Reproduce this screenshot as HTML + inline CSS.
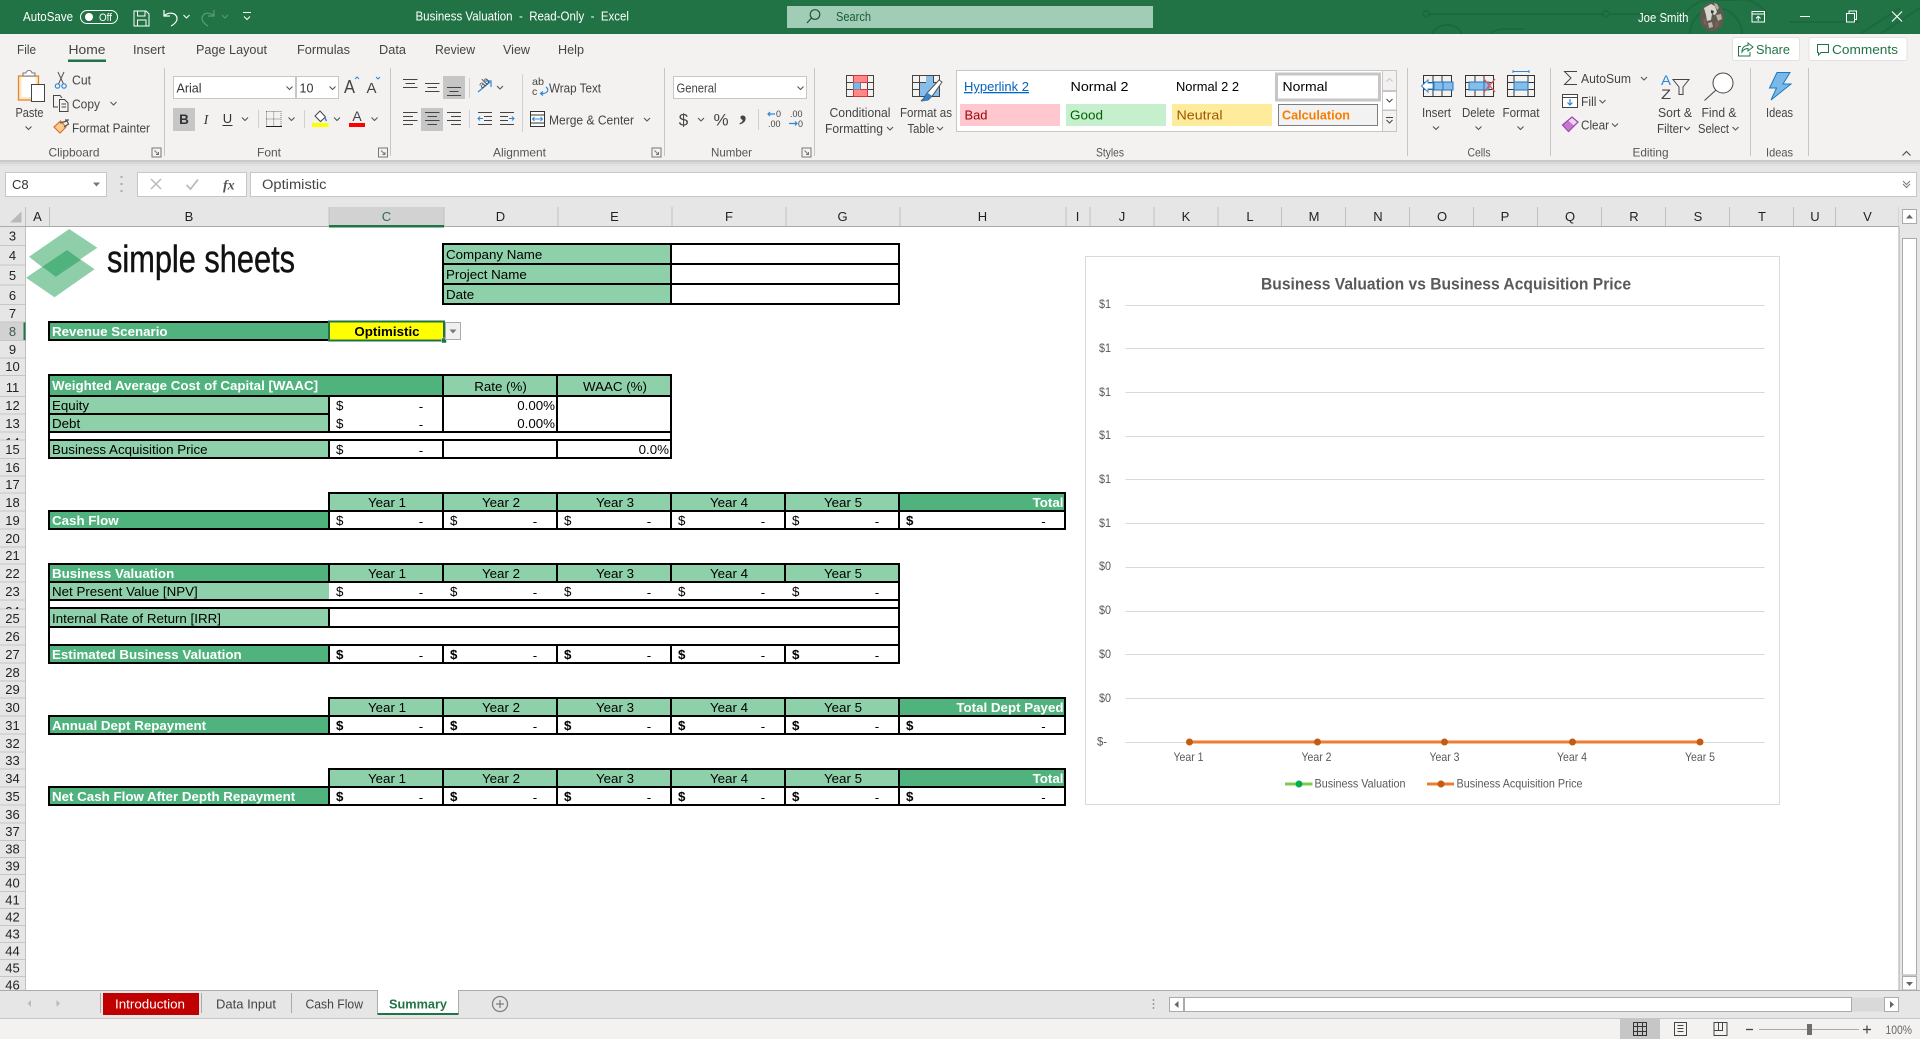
<!DOCTYPE html>
<html lang="en"><head><meta charset="utf-8"><title>Business Valuation - Excel</title>
<style>
html,body{margin:0;padding:0;width:1920px;height:1039px;overflow:hidden;background:#fff}
svg{display:block}
text{font-family:"Liberation Sans",Arial,sans-serif}
.w{fill:#fff;font-size:13px}
.t{fill:#444;font-size:13px}
.g{fill:#555;font-size:12px}
.c{fill:#000;font-size:13.33px}
.b{fill:#fff;font-size:13.33px;font-weight:bold}
.k{fill:#000;font-size:13.33px;font-weight:bold}
.m{text-anchor:middle}
.e{text-anchor:end}
.rh{fill:#222;font-size:13px;text-anchor:middle}
.ax{fill:#595959;font-size:12px}
.ln{fill:none;stroke:#444;stroke-width:1}
.bl{fill:none;stroke:#2b88d8;stroke-width:1.2}
</style></head><body>
<svg xmlns="http://www.w3.org/2000/svg" width="1920" height="1039" viewBox="0 0 1920 1039">
<defs><path id="ch" d="M-3 -1.5L0 1.5L3 -1.5" fill="none" stroke="#555" stroke-width="1.1"/>
<path id="dl" d="M-4.500 -4.500H4.500V4.500H-4.500ZM-2 -2L2 2M2 -.5V2H-.5" fill="none" stroke="#777" stroke-width="1"/></defs>

<!-- title bar -->
<rect width="1920" height="34" fill="#217346"/>
<g fill="none" stroke="#1b6a3d" stroke-width="2">
<path d="M1429 14H1603M1610 14H1660"/><circle cx="1426" cy="14" r="3"/><circle cx="1606" cy="14" r="3"/>
<path d="M1432 34a16 14 0 0 1 30 0M1490 34q5-5 14-5h20M1690 34a26 26 0 0 1 52 0M1685 14a30 30 0 0 1 30-14h22a30 30 0 0 1 30 14M1860 34l40-26M1880 34l40-26M1790 22h70"/>
</g>
<text class="w" x="23" y="21" textLength="50" lengthAdjust="spacingAndGlyphs">AutoSave</text>
<rect x="80.500" y="10.500" width="37" height="13" rx="6.500" fill="none" stroke="#fff"/>
<circle cx="89" cy="17" r="4" fill="#fff"/>
<text class="w" x="99" y="21" style="font-size:11px" textLength="13" lengthAdjust="spacingAndGlyphs">Off</text>
<path d="M134 11H146L149 14V26H134ZM137.500 11V16H145V11M137.500 26V20H146V26" fill="none" stroke="#fff"/>
<path d="M164 10V16H170M164 16C168 12 176 12 177 18C177.500 22 173 25 171 26" fill="none" stroke="#fff" stroke-width="1.200"/>
<path d="M183.500 15l3 3l3-3" fill="none" stroke="#fff"/>
<path d="M214 10V16H208M214 16C210 12 203 12 202 18C202 22 206 25 208 26" fill="none" stroke="#5c9a78" stroke-width="1.200"/>
<path d="M222 15l3 3l3-3" fill="none" stroke="#5c9a78"/>
<path d="M243 12.500H251M244 16.500l3 3l3-3" fill="none" stroke="#fff"/>
<text class="w" x="415.500" y="20.500" textLength="213.500" lengthAdjust="spacingAndGlyphs" xml:space="preserve">Business Valuation  -  Read-Only  -  Excel</text>
<rect x="787" y="6" width="366" height="22" fill="#a1cdb6"/>
<circle cx="815" cy="14.500" r="4.800" fill="none" stroke="#1c5a38" stroke-width="1.200"/><path d="M811.500 18L807 23" stroke="#1c5a38" stroke-width="1.300"/>
<text x="836" y="21" style="font-size:13px;fill:#1a5c3a" textLength="35" lengthAdjust="spacingAndGlyphs">Search</text>
<text class="w" x="1638" y="22" textLength="50.500" lengthAdjust="spacingAndGlyphs">Joe Smith</text>
<ellipse cx="1712" cy="17" rx="12" ry="14.500" fill="#5d5a50"/>
<path d="M1704 8l7-4l4 2l2 6l-2 3l-3-1l-1 6l-4 1l-1-6z" fill="#d9d6cf"/>
<path d="M1714 3l3 1l2 4l-2 2zM1716 15l5-1l1 5l-4 2zM1708 23l4-1l1 5l-4 1z" fill="#b8b2a6"/>
<path d="M1703 18l3 1l1 7l-3-2zM1715 22l4-1l-1 6l-3 1z" fill="#7d5f58"/><path d="M1711 10l3 1l-1 3l-2-1z" fill="#3a3a34"/>
<path d="M1752 11.500H1764.500V22H1752ZM1752 14H1764.500M1758.200 21V16.500M1756 18.500L1758.200 16.200L1760.500 18.500" fill="none" stroke="#fff"/>
<path d="M1800 16.500H1810" stroke="#fff"/>
<path d="M1846.500 13.500H1854.500V22H1846.500ZM1849 13.500V11H1856.500V19.500H1854.500" fill="none" stroke="#fff"/>
<path d="M1892 11.500L1902 21.500M1902 11.500L1892 21.500" stroke="#fff" stroke-width="1.100"/>

<!-- ribbon -->
<rect y="34" width="1920" height="126" fill="#f3f2f1"/>
<rect y="160" width="1920" height="47" fill="#e6e6e6"/>
<rect y="160" width="1920" height="2" fill="#c9c9c9"/><rect y="162" width="1920" height="2" fill="#d8d8d8"/><rect y="164" width="1920" height="2" fill="#e1e1e1"/>
<g class="t">
<text x="17" y="54" textLength="19" lengthAdjust="spacingAndGlyphs">File</text>
<text x="68.500" y="54" textLength="37" lengthAdjust="spacingAndGlyphs">Home</text>
<text x="133" y="54" textLength="32" lengthAdjust="spacingAndGlyphs">Insert</text>
<text x="196" y="54" textLength="71" lengthAdjust="spacingAndGlyphs">Page Layout</text>
<text x="297" y="54" textLength="53" lengthAdjust="spacingAndGlyphs">Formulas</text>
<text x="379" y="54" textLength="27" lengthAdjust="spacingAndGlyphs">Data</text>
<text x="435" y="54" textLength="40" lengthAdjust="spacingAndGlyphs">Review</text>
<text x="503" y="54" textLength="27" lengthAdjust="spacingAndGlyphs">View</text>
<text x="558" y="54" textLength="26" lengthAdjust="spacingAndGlyphs">Help</text>
</g>
<rect x="68" y="59.500" width="38" height="2.500" fill="#217346"/>
<rect x="1732.500" y="37.500" width="67" height="23" rx="2" fill="#fff" stroke="#e4e2e0"/>
<path d="M1741 46.500H1738.500V56H1750V52M1742 52C1742 47 1745 45.500 1748 45.500V43L1753 47L1748 51V48.500C1745.500 48.500 1743.500 49.500 1742 52Z" fill="none" stroke="#217346"/>
<text x="1756" y="54" style="font-size:13px;fill:#217346" textLength="34" lengthAdjust="spacingAndGlyphs">Share</text>
<rect x="1809" y="37.500" width="98" height="23" rx="2" fill="#fff" stroke="#e4e2e0"/>
<path d="M1817.500 44.500H1828.500V52.500H1821L1818.500 55V52.500H1817.500Z" fill="none" stroke="#217346"/>
<text x="1832" y="54" style="font-size:13px;fill:#217346" textLength="66" lengthAdjust="spacingAndGlyphs">Comments</text>

<!-- separators -->
<path d="M164.500 68V156M390.500 68V156M664.500 68V156M814.500 68V156M1407.500 68V156M1550.500 68V156M1750.500 68V156M1808.500 68V156" stroke="#c8c6c4"/>
<path d="M258.500 110V128M304.500 110V128M469.500 78V98M469.500 110V128M522.500 74V132M758.500 109V130" stroke="#d2d0ce"/>
<g class="g" text-anchor="middle">
<text x="74" y="156.500" textLength="51" lengthAdjust="spacingAndGlyphs">Clipboard</text>
<text x="269" y="156.500">Font</text>
<text x="519.500" y="156.500" textLength="53" lengthAdjust="spacingAndGlyphs">Alignment</text>
<text x="731.500" y="156.500" textLength="41" lengthAdjust="spacingAndGlyphs">Number</text>
<text x="1110" y="156.500" textLength="28" lengthAdjust="spacingAndGlyphs">Styles</text>
<text x="1479" y="156.500" textLength="23" lengthAdjust="spacingAndGlyphs">Cells</text>
<text x="1650.500" y="156.500" textLength="36" lengthAdjust="spacingAndGlyphs">Editing</text>
<text x="1779.500" y="156.500" textLength="27" lengthAdjust="spacingAndGlyphs">Ideas</text>
</g>
<use href="#dl" x="156.500" y="152.500"/><use href="#dl" x="383" y="152.500"/><use href="#dl" x="656.500" y="152.500"/><use href="#dl" x="806.500" y="152.500"/>
<path d="M1902.500 155.500L1906.500 151.500L1910.500 155.500" fill="none" stroke="#555" stroke-width="1.200"/>

<!-- clipboard -->
<rect x="18.500" y="76" width="20" height="24" fill="#fbe7c3" stroke="#e3882a" stroke-width="1.300"/>
<rect x="21.500" y="77" width="14" height="20" fill="#fff"/>
<path d="M23 76V73H26A3 2.500 0 0 1 32 73H35V76Z" fill="#fff" stroke="#777"/>
<rect x="31.500" y="84.500" width="13" height="17" fill="#fff" stroke="#444"/>
<text class="t m" x="29.500" y="117" textLength="28" lengthAdjust="spacingAndGlyphs">Paste</text>
<use href="#ch" x="28.500" y="128"/>
<path d="M58 72L63.500 84M64 72L58.500 84" fill="none" stroke="#555"/><circle cx="57.500" cy="86" r="2.200" fill="none" stroke="#2b88d8" stroke-width="1.200"/><circle cx="64" cy="86" r="2.200" fill="none" stroke="#2b88d8" stroke-width="1.200"/>
<text class="t" x="72" y="84.500" textLength="19" lengthAdjust="spacingAndGlyphs">Cut</text>
<path d="M58 107H53.500V95.500H60L62 98M59.500 99.500H64.500L68 103V111.500H59.500ZM61.500 104H66M61.500 107H66" fill="none" stroke="#444"/>
<text class="t" x="72" y="108.500" textLength="28" lengthAdjust="spacingAndGlyphs">Copy</text>
<use href="#ch" x="113.500" y="103.500"/>
<path d="M54 127L60.500 121L66 127L60 133Z" fill="#f5cd96" stroke="#e3712a" stroke-width="1.200"/><path d="M60 123L67 121L68.500 124L64 127M65 120L69 120" fill="none" stroke="#555" stroke-width="1.200"/>
<text class="t" x="72" y="132.500" textLength="78" lengthAdjust="spacingAndGlyphs">Format Painter</text>

<!-- font -->
<rect x="173.500" y="76.500" width="122" height="22" fill="#fff" stroke="#c8c6c4"/>
<text x="176.500" y="92.500" style="font-size:12.500px;fill:#333">Arial</text><use href="#ch" x="289.500" y="88"/>
<rect x="296.500" y="76.500" width="42" height="22" fill="#fff" stroke="#c8c6c4"/>
<text x="299.500" y="92.500" style="font-size:12.500px;fill:#333">10</text><use href="#ch" x="332.500" y="88"/>
<text x="344" y="93" style="font-size:18px;fill:#444" textLength="11" lengthAdjust="spacingAndGlyphs">A</text><path d="M355 79L357 77L359 79" fill="none" stroke="#2b88d8"/>
<text x="366.500" y="93" style="font-size:15px;fill:#444" textLength="10" lengthAdjust="spacingAndGlyphs">A</text><path d="M376 77L378 79L380 77" fill="none" stroke="#2b88d8"/>
<rect x="173" y="108" width="22" height="23" fill="#c6c6c6"/>
<text x="184" y="124" style="font-size:13.500px;font-weight:bold;fill:#333" text-anchor="middle">B</text>
<text x="206" y="124" style="font-size:13.500px;font-style:italic;fill:#333;font-family:'Liberation Serif',serif" text-anchor="middle">I</text>
<text x="227.500" y="123" style="font-size:13px;fill:#333" text-anchor="middle">U</text><path d="M222.500 125.500H232.500" stroke="#333"/>
<use href="#ch" x="245" y="119"/>
<path d="M266.500 111.500H281V126.500H266.500ZM273.700 111.500V126.500M266.500 119H281" fill="none" stroke="#777" stroke-dasharray="1 1"/><path d="M266 126.500H282" stroke="#222"/>
<use href="#ch" x="291.500" y="119"/>
<path d="M315 116L320 111L325.500 117L320.500 121.500Z" fill="#fff" stroke="#444"/><path d="M324.500 117L326.500 121" stroke="#2b88d8" stroke-width="1.500"/>
<rect x="312" y="123" width="16.500" height="4" fill="#ffff00"/>
<use href="#ch" x="337" y="119"/>
<text x="357" y="121" style="font-size:14px;fill:#444" text-anchor="middle">A</text><rect x="349" y="123" width="16" height="4" fill="#ff0000"/>
<use href="#ch" x="374.500" y="119"/>

<!-- alignment -->
<rect x="443" y="76" width="22" height="23" fill="#c6c6c6"/><rect x="421" y="108" width="22" height="23" fill="#c6c6c6"/>
<path d="M403 79.500H417.500M405.500 83.500H415M403 87.500H417.500M425 83.500H439.500M427.500 87.500H437M425 91.500H439.500M447 87.500H461M449.500 91.500H458.500M447 95.500H461" stroke="#444"/>
<path d="M403 112.500H417.500M403 116.500H413M403 120.500H417.500M403 124.500H413M425 112.500H439.500M427.500 116.500H437M425 120.500H439.500M427.500 124.500H437M447 112.500H461M451 116.500H461M447 120.500H461M451 124.500H461" stroke="#444"/>
<path d="M478 92L490 82M485 81h6v6" fill="none" stroke="#2b88d8" stroke-width="1.200"/>
<text x="484" y="86" style="font-size:10px;fill:#444" text-anchor="middle" transform="rotate(-45 484 83)">ab</text>
<use href="#ch" x="500" y="87.500"/>
<path d="M478 112.500H492M484 116.500H492M484 120.500H492M478 124.500H492M500 112.500H514M500 116.500H508M500 120.500H508M500 124.500H514" stroke="#444"/>
<path d="M483 118.500H478M480 116.500L478 118.500L480 120.500M509 118.500H514M512 116.500L514 118.500L512 120.500" fill="none" stroke="#2b88d8"/>
<text x="532" y="85" style="font-size:10.500px;fill:#444" textLength="12" lengthAdjust="spacingAndGlyphs">ab</text>
<text x="532" y="95" style="font-size:10.500px;fill:#444">c</text>
<path d="M546 87C550 90 547 94 541 93.500M543 91.500L540.500 93.500L543 95.500" fill="none" stroke="#2b88d8" stroke-width="1.200"/>
<text class="t" x="549" y="92.500" textLength="52" lengthAdjust="spacingAndGlyphs">Wrap Text</text>
<rect x="530.500" y="111.500" width="14" height="15" fill="#fff" stroke="#333"/><path d="M530.500 115H544.500M530.500 123H544.500" stroke="#333"/><path d="M533 119H542M534.500 117L532.500 119L534.500 121M540.500 117L542.500 119L540.500 121" fill="none" stroke="#2b88d8"/>
<text class="t" x="549" y="124.500" textLength="85" lengthAdjust="spacingAndGlyphs">Merge &amp; Center</text>
<use href="#ch" x="647" y="119.500"/>

<!-- number -->
<rect x="673.500" y="76.500" width="133" height="22" fill="#fff" stroke="#c8c6c4"/>
<text x="676.500" y="92.500" style="font-size:12.500px;fill:#444" textLength="40" lengthAdjust="spacingAndGlyphs">General</text><use href="#ch" x="800.500" y="88"/>
<text x="683.500" y="125.500" style="font-size:17px;fill:#444" text-anchor="middle">$</text><use href="#ch" x="701" y="119.500"/>
<text x="721" y="125.500" style="font-size:17px;fill:#444" text-anchor="middle">%</text>
<text x="743" y="120" style="font-size:30px;font-weight:bold;fill:#444;font-family:'Liberation Serif',serif" text-anchor="middle">,</text>
<text x="776" y="117" style="font-size:9px;fill:#444">0</text><text x="768" y="127" style="font-size:9px;fill:#444">.00</text>
<path d="M775 114H768M770 112L768 114L770 116" fill="none" stroke="#2b88d8" stroke-width="1.200"/>
<text x="790" y="117" style="font-size:9px;fill:#444">.00</text><text x="798" y="127" style="font-size:9px;fill:#444">0</text>
<path d="M789 123.500H797M795 121.500L797 123.500L795 125.500" fill="none" stroke="#2b88d8" stroke-width="1.200"/>

<!-- styles -->
<g fill="none" stroke="#444"><rect x="846.500" y="75.500" width="27" height="21"/><path d="M853.500 75.500V96.500M860.500 75.500V96.500M867.500 75.500V96.500M846.500 82.500H873.500M846.500 89.500H873.500"/></g>
<rect x="853.500" y="75.500" width="14" height="7" fill="#f88" stroke="#d33"/><rect x="853.500" y="89.500" width="14" height="7" fill="#f88" stroke="#d33"/><rect x="853.500" y="82.500" width="7" height="7" fill="#7ab8e8"/>
<text class="t m" x="860" y="117" textLength="61" lengthAdjust="spacingAndGlyphs">Conditional</text>
<text class="t m" x="854" y="133" textLength="58" lengthAdjust="spacingAndGlyphs">Formatting</text><use href="#ch" x="890" y="128.500"/>
<g fill="none" stroke="#444"><rect x="912.500" y="75.500" width="27" height="21"/><path d="M919.500 75.500V96.500M926.500 75.500V96.500M933.500 75.500V96.500M912.500 82.500H939.500M912.500 89.500H939.500"/></g>
<rect x="920" y="83" width="19" height="13" fill="#86bdea"/><rect x="926" y="76" width="7" height="7" fill="#86bdea"/>
<path d="M942 82L933 95L928 100L921 101C925 98 925 95 928 92L939 80Z" fill="#fff" stroke="#555"/><path d="M928 93L932 96L927 100.500L921.500 101C925 98.500 925 96 928 93Z" fill="#2b88d8"/>
<text class="t m" x="926" y="117" textLength="52" lengthAdjust="spacingAndGlyphs">Format as</text>
<text class="t m" x="921" y="133" textLength="27" lengthAdjust="spacingAndGlyphs">Table</text><use href="#ch" x="940" y="128.500"/>

<rect x="956.500" y="70.500" width="440" height="61" fill="#fff" stroke="#c8c6c4"/>
<text x="964" y="91" style="font-size:13px;fill:#0563c1;text-decoration:underline" textLength="65" lengthAdjust="spacingAndGlyphs">Hyperlink 2</text>
<text x="1070.500" y="91" style="font-size:13px;fill:#000" textLength="58" lengthAdjust="spacingAndGlyphs">Normal 2</text>
<text x="1176" y="91" style="font-size:13px;fill:#000" textLength="63" lengthAdjust="spacingAndGlyphs">Normal 2 2</text>
<rect x="1276.500" y="74" width="103" height="26" fill="#fff" stroke="#c6c6c6" stroke-width="3"/>
<text x="1282.500" y="91" style="font-size:13px;fill:#000" textLength="45" lengthAdjust="spacingAndGlyphs">Normal</text>
<rect x="960" y="104" width="100" height="22" fill="#ffc7ce"/><text x="964.500" y="119.500" style="font-size:13px;fill:#9c0006" textLength="23" lengthAdjust="spacingAndGlyphs">Bad</text>
<rect x="1066" y="104" width="100" height="22" fill="#c6efce"/><text x="1070" y="119.500" style="font-size:13px;fill:#006100" textLength="33" lengthAdjust="spacingAndGlyphs">Good</text>
<rect x="1172" y="104" width="100" height="22" fill="#ffeb9c"/><text x="1176.500" y="119.500" style="font-size:13px;fill:#9c5700" textLength="46" lengthAdjust="spacingAndGlyphs">Neutral</text>
<rect x="1278.500" y="104.500" width="99" height="21" fill="#f2f2f2" stroke="#7f7f7f"/><text x="1282" y="119.500" style="font-size:13px;font-weight:bold;fill:#fa7d00" textLength="68" lengthAdjust="spacingAndGlyphs">Calculation</text>
<rect x="1382.500" y="70.500" width="14" height="20" fill="#f3f2f1" stroke="#c8c6c4"/><rect x="1382.500" y="91.500" width="14" height="18.500" fill="#fff" stroke="#c8c6c4"/><rect x="1382.500" y="110.500" width="14" height="21" fill="#f3f2f1" stroke="#c8c6c4"/>
<path d="M1386.500 81.500L1389.500 78.500L1392.500 81.500" fill="none" stroke="#c8c6c4"/><path d="M1386.500 99L1389.500 102L1392.500 99" fill="none" stroke="#444"/><path d="M1386 117.500H1393M1386.500 120L1389.500 123L1392.500 120" fill="none" stroke="#444"/>

<!-- cells -->
<g fill="none" stroke="#333"><rect x="1423.500" y="75.500" width="28" height="21"/><path d="M1433 75.500V96.500M1442 75.500V96.500M1423.500 82.500H1451.500M1423.500 89.500H1451.500"/></g>
<rect x="1434" y="82" width="19" height="8" fill="#86bdea" stroke="#1f78c1"/><path d="M1443 82V90" stroke="#1f78c1"/>
<path d="M1433 83H1428V80L1421.500 86L1428 92V89H1433Z" fill="#fff" stroke="#2b88d8"/>
<text class="t m" x="1436.500" y="117" textLength="29" lengthAdjust="spacingAndGlyphs">Insert</text><use href="#ch" x="1436" y="128"/>
<g fill="none" stroke="#333"><rect x="1465.500" y="75.500" width="28" height="21"/><path d="M1475 75.500V96.500M1484 75.500V96.500M1465.500 82.500H1493.500M1465.500 89.500H1493.500"/></g>
<rect x="1469" y="82" width="20" height="8" fill="#86bdea" stroke="#1f78c1"/><path d="M1484 82V90" stroke="#1f78c1"/>
<path d="M1484 79L1495 92M1495 79L1484 92" stroke="#e8534a" stroke-width="1.300"/>
<text class="t m" x="1478.500" y="117" textLength="33" lengthAdjust="spacingAndGlyphs">Delete</text><use href="#ch" x="1478.500" y="128"/>
<g fill="none" stroke="#333"><rect x="1507.500" y="75.500" width="27" height="21"/><path d="M1514 75.500V96.500M1528 75.500V96.500M1507.500 82.500H1534.500M1507.500 89.500H1534.500"/></g>
<rect x="1514" y="82" width="14" height="8" fill="#86bdea" stroke="#1f78c1"/>
<path d="M1513 71.500H1529M1513 70V73M1529 70V73" stroke="#2b88d8"/>
<text class="t m" x="1521" y="117" textLength="37" lengthAdjust="spacingAndGlyphs">Format</text><use href="#ch" x="1520.500" y="128"/>

<!-- editing -->
<path d="M1577 71.500H1564.500L1571 78L1564.500 84.500H1577" fill="none" stroke="#444"/>
<text class="t" x="1581" y="83" textLength="50" lengthAdjust="spacingAndGlyphs">AutoSum</text><use href="#ch" x="1644" y="78.500"/>
<rect x="1562.500" y="94.500" width="15" height="13" fill="#fff" stroke="#444"/><path d="M1562.500 97.500H1577.500" stroke="#444"/><path d="M1570 99V105M1567.500 102.500L1570 105L1572.500 102.500" fill="none" stroke="#2b88d8" stroke-width="1.200"/>
<text class="t" x="1581" y="106" textLength="15.500" lengthAdjust="spacingAndGlyphs">Fill</text><use href="#ch" x="1602.500" y="101.500"/>
<path d="M1562.500 125L1572 117L1578 122L1568.500 131.500Z" fill="#f0d4f0" stroke="#9c3fb0" stroke-width="1.200"/><path d="M1562.500 125L1568 120.500L1574 125.500L1568.500 131.500Z" fill="#b44fc0" opacity=".7"/>
<text class="t" x="1581" y="129.500" textLength="28" lengthAdjust="spacingAndGlyphs">Clear</text><use href="#ch" x="1615" y="125"/>
<text x="1661" y="85" style="font-size:14px;fill:#2b88d8" textLength="10" lengthAdjust="spacingAndGlyphs">A</text>
<text x="1661" y="99" style="font-size:14px;fill:#444" textLength="10" lengthAdjust="spacingAndGlyphs">Z</text>
<path d="M1673 79.500H1689L1683 87V94.500H1679V87Z" fill="none" stroke="#444"/>
<text class="t m" x="1675" y="117" textLength="34" lengthAdjust="spacingAndGlyphs">Sort &amp;</text>
<text class="t m" x="1670" y="133" textLength="26" lengthAdjust="spacingAndGlyphs">Filter</text><use href="#ch" x="1687" y="128.500"/>
<circle cx="1723" cy="83" r="10" fill="#fff" stroke="#444"/><path d="M1716 90L1704.500 100.500" stroke="#444"/>
<text class="t m" x="1719" y="117" textLength="35" lengthAdjust="spacingAndGlyphs">Find &amp;</text>
<text class="t m" x="1713.500" y="133" textLength="31" lengthAdjust="spacingAndGlyphs">Select</text><use href="#ch" x="1735.500" y="128.500"/>
<path d="M1777 72.500H1790L1783 84H1791L1771 100L1776.500 88H1769.500Z" fill="#7ab8e8" stroke="#1f78c1"/>
<text class="t m" x="1779.500" y="117" textLength="27" lengthAdjust="spacingAndGlyphs">Ideas</text>

<!-- formula bar -->
<rect x="5.500" y="172.500" width="101" height="24" fill="#fff" stroke="#c8c6c4"/>
<text x="12" y="189" style="font-size:13px;fill:#333">C8</text><path d="M93 182.500H100L96.500 186.500Z" fill="#777"/>
<path d="M121.500 176V178M121.500 183V185M121.500 190V192" stroke="#aaa" stroke-width="2"/>
<rect x="137.500" y="172.500" width="109" height="24" fill="#fff" stroke="#c8c6c4"/>
<path d="M151 179L161 189M161 179L151 189" stroke="#bbb" stroke-width="1.500"/>
<path d="M186.500 185L190.500 189L198 179.500" fill="none" stroke="#bbb" stroke-width="1.800"/>
<text x="223" y="189.500" style="font-size:14px;font-style:italic;font-family:'Liberation Serif',serif;fill:#555;font-weight:bold">fx</text>
<rect x="250.500" y="172.500" width="1666" height="24" fill="#fff" stroke="#c8c6c4"/>
<text x="262" y="189" style="font-size:13.500px;fill:#444" textLength="64.500" lengthAdjust="spacingAndGlyphs">Optimistic</text>
<path d="M1903 181L1906.500 184.500L1910 181M1903 184L1906.500 187.500L1910 184" fill="none" stroke="#777"/>

<!-- sheet -->
<rect x="0" y="207" width="1920" height="783" fill="#e6e6e6"/>
<rect x="25.500" y="227" width="1873.500" height="763" fill="#fff"/>
<rect x="329" y="207" width="115" height="18" fill="#d2d2d2"/>
<rect x="0" y="322" width="23.500" height="18.500" fill="#d2d2d2"/>
<path d="M10 222.500H21.500V211.500Z" fill="#b9b9b9"/>
<path d="M25.500 207V990M49.500 207V226M329 207V226M444 207V226M558 207V226M672 207V226M786 207V226M900 207V226M1066 207V226M1090 207V226M1154 207V226M1218 207V226M1281.500 207V226M1345.500 207V226M1409.500 207V226M1473.500 207V226M1537.500 207V226M1601.500 207V226M1665.500 207V226M1729.500 207V226M1793.500 207V226M1835.500 207V226M1899 207V226" stroke="#c0c0c0" fill="none"/>
<path d="M0 226.500H1899" stroke="#ababab"/><rect x="329" y="225" width="115" height="2.500" fill="#217346"/>
<rect x="23.500" y="322" width="2" height="18.500" fill="#217346"/>
<g style="font-size:13px;fill:#222" text-anchor="middle">
<text x="37.500" y="221">A</text><text x="189" y="221">B</text><text x="386.500" y="221" style="fill:#2d6b4f">C</text><text x="500.500" y="221">D</text><text x="614.500" y="221">E</text><text x="729" y="221">F</text><text x="842.500" y="221">G</text><text x="982.500" y="221">H</text><text x="1077.500" y="221">I</text><text x="1122" y="221">J</text><text x="1186" y="221">K</text><text x="1250" y="221">L</text><text x="1314" y="221">M</text><text x="1378" y="221">N</text><text x="1442" y="221">O</text><text x="1505" y="221">P</text><text x="1570" y="221">Q</text><text x="1634" y="221">R</text><text x="1698" y="221">S</text><text x="1762" y="221">T</text><text x="1815" y="221">U</text><text x="1867.500" y="221">V</text>
</g>
<path stroke="#c6c6c6" d="M0 245.500H25M0 265H25M0 285H25M0 304.500H25M0 322H25M0 340.500H25M0 358H25M0 375.500H25M0 396.500H25M0 414H25M0 432H25M0 440H25M0 458.500H25M0 476H25M0 493H25M0 511H25M0 529H25M0 547H25M0 564H25M0 582H25M0 600H25M0 609H25M0 627H25M0 645H25M0 663H25M0 681H25M0 698H25M0 716H25M0 734H25M0 752H25M0 769H25M0 787H25M0 805H25M0 823H25M0 840.500H25M0 857.500H25M0 874.500H25M0 891.500H25M0 908.500H25M0 925.500H25M0 942.500H25M0 959.500H25M0 976.500H25"/>
<g class="rh">
<text x="12.500" y="240.500">3</text><text x="12.500" y="260">4</text><text x="12.500" y="280">5</text><text x="12.500" y="300">6</text><text x="12.500" y="318">7</text><text x="12.500" y="336" style="fill:#3f5a4c">8</text><text x="12.500" y="354">9</text><text x="12.500" y="371">10</text><text x="12.500" y="392">11</text><text x="12.500" y="410">12</text><text x="12.500" y="428">13</text>
<text x="12.500" y="454">15</text><text x="12.500" y="472">16</text><text x="12.500" y="489">17</text><text x="12.500" y="507">18</text><text x="12.500" y="525">19</text><text x="12.500" y="543">20</text><text x="12.500" y="560">21</text><text x="12.500" y="578">22</text><text x="12.500" y="596">23</text>
<text x="12.500" y="623">25</text><text x="12.500" y="641">26</text><text x="12.500" y="659">27</text><text x="12.500" y="677">28</text><text x="12.500" y="694">29</text><text x="12.500" y="712">30</text><text x="12.500" y="730">31</text><text x="12.500" y="748">32</text><text x="12.500" y="765">33</text><text x="12.500" y="783">34</text><text x="12.500" y="801">35</text><text x="12.500" y="819">36</text><text x="12.500" y="836">37</text><text x="12.500" y="853.500">38</text><text x="12.500" y="870.500">39</text><text x="12.500" y="887.500">40</text><text x="12.500" y="904.500">41</text><text x="12.500" y="921.500">42</text><text x="12.500" y="938.500">43</text><text x="12.500" y="955.500">44</text><text x="12.500" y="972.500">45</text><text x="12.500" y="989.500">46</text>
</g>
<svg x="0" y="433" width="25" height="7"><text class="rh" x="12.500" y="14">14</text></svg>
<svg x="0" y="601" width="25" height="8"><text class="rh" x="12.500" y="15">24</text></svg>
<rect x="0" y="990" width="25" height="2" fill="#e6e6e6"/>

<!-- logo -->
<path d="M69.200 229L97.300 247.700L54.500 276.700L29 256.700Z" fill="#8ecea9"/>
<path d="M67 250L94.600 269.300L54.500 297.300L26 277.700Z" fill="#8ecea9"/>
<path d="M67 250L80.800 260L55.800 276.700L42.400 266.700Z" fill="#50b37e"/>
<text x="107" y="272" style="font-size:38px;fill:#111;stroke:#111;stroke-width:.4" textLength="188" lengthAdjust="spacingAndGlyphs">simple sheets</text>

<!-- fills -->
<g fill="#8ed0a9">
<rect x="443" y="244" width="228" height="60"/>
<rect x="443" y="375" width="228" height="21"/>
<rect x="49" y="396" width="280" height="36"/>
<rect x="49" y="440" width="280" height="18"/>
<rect x="329" y="493" width="570" height="18"/>
<rect x="329" y="564" width="570" height="18"/>
<rect x="49" y="582" width="280" height="18"/>
<rect x="49" y="608" width="280" height="19"/>
<rect x="329" y="698" width="570" height="18"/>
<rect x="329" y="769" width="570" height="18"/>
</g>
<g fill="#50b37e">
<rect x="49" y="322" width="280" height="18"/>
<rect x="49" y="375" width="394" height="21"/>
<rect x="899" y="493" width="166" height="18"/>
<rect x="49" y="511" width="280" height="18"/>
<rect x="49" y="564" width="280" height="18"/>
<rect x="49" y="645" width="280" height="18"/>
<rect x="899" y="698" width="166" height="18"/>
<rect x="49" y="716" width="280" height="18"/>
<rect x="899" y="769" width="166" height="18"/>
<rect x="49" y="787" width="280" height="18"/>
</g>
<rect x="329" y="322" width="115" height="18" fill="#ffff00"/>

<!-- borders -->
<path fill="none" stroke="#000" stroke-width="2" d="
M442 244H900M442 264H900M442 284H900M442 304H900M443 243V305M671 244V304M899 243V305
M48 322H329M48 340H329M49 321V341
M48 375H672M48 396H672M49 396V414M49 414H329M48 432H672M48 440H672M48 458H672M49 374V459M329 396V432M329 440V458M443 375V432M443 440V458M557 375V432M557 440V458M671 374V459
M328 493H1066M48 511H1066M48 529H1066M49 510V530M329 492V530M443 493V529M557 493V529M671 493V529M785 493V529M899 493V529M1065 492V530
M48 564H900M48 582H900M48 600H900M48 608H900M48 627H900M48 645H900M48 663H900M49 563V664M899 563V664M329 564V582M443 564V582M557 564V582M671 564V582M785 564V582M329 608V627M329 645V663M443 645V663M557 645V663M671 645V663M785 645V663
M328 698H1066M48 716H1066M48 734H1066M49 715V735M329 697V735M443 698V734M557 698V734M671 698V734M785 698V734M899 698V734M1065 697V735
M328 769H1066M48 787H1066M48 805H1066M49 786V806M329 768V806M443 769V805M557 769V805M671 769V805M785 769V805M899 769V805M1065 768V806"/>

<!-- selection -->
<rect x="329" y="321.500" width="115" height="19" fill="none" stroke="#217346" stroke-width="2"/>
<rect x="441.500" y="338" width="5" height="5" fill="#217346" stroke="#fff" stroke-width=".5"/>
<rect x="445.500" y="322.500" width="15" height="17" fill="#f0f0f0" stroke="#ababab"/><path d="M449.500 329.500H456.500L453 333.500Z" fill="#777"/>

<!-- sheet text -->
<text class="c" x="446" y="259">Company Name</text><text class="c" x="446" y="279">Project Name</text><text class="c" x="446" y="299">Date</text>
<text class="b" x="52" y="336">Revenue Scenario</text><text class="k m" x="387" y="336">Optimistic</text>
<text class="b" x="52" y="390">Weighted Average Cost of Capital [WAAC]</text>
<text class="c m" x="500.500" y="391">Rate (%)</text><text class="c m" x="615" y="391">WAAC (%)</text>
<text class="c" x="52" y="410">Equity</text><text class="c" x="336" y="410">$</text><text class="c m" x="421" y="411">-</text><text class="c e" x="555" y="410">0.00%</text>
<text class="c" x="52" y="428">Debt</text><text class="c" x="336" y="428">$</text><text class="c m" x="421" y="429">-</text><text class="c e" x="555" y="428">0.00%</text>
<text class="c" x="52" y="454">Business Acquisition Price</text><text class="c" x="336" y="454">$</text><text class="c m" x="421" y="455">-</text><text class="c e" x="669" y="454">0.0%</text>

<g class="c m"><text x="387" y="507">Year 1</text><text x="501" y="507">Year 2</text><text x="615" y="507">Year 3</text><text x="729" y="507">Year 4</text><text x="843" y="507">Year 5</text></g>
<text class="b e" x="1063.500" y="507">Total</text>
<text class="b" x="52" y="525">Cash Flow</text>
<g class="c"><text x="336" y="525">$</text><text x="450" y="525">$</text><text x="564" y="525">$</text><text x="678" y="525">$</text><text x="792" y="525">$</text></g>
<text class="k" x="906" y="525">$</text>
<g class="c m"><text x="421" y="526">-</text><text x="535" y="526">-</text><text x="649" y="526">-</text><text x="763" y="526">-</text><text x="877" y="526">-</text><text x="1043.500" y="526">-</text></g>

<text class="b" x="52" y="578">Business Valuation</text>
<g class="c m"><text x="387" y="578">Year 1</text><text x="501" y="578">Year 2</text><text x="615" y="578">Year 3</text><text x="729" y="578">Year 4</text><text x="843" y="578">Year 5</text></g>
<text class="c" x="52" y="596">Net Present Value [NPV]</text>
<g class="c"><text x="336" y="596">$</text><text x="450" y="596">$</text><text x="564" y="596">$</text><text x="678" y="596">$</text><text x="792" y="596">$</text></g>
<g class="c m"><text x="421" y="597">-</text><text x="535" y="597">-</text><text x="649" y="597">-</text><text x="763" y="597">-</text><text x="877" y="597">-</text></g>
<text class="c" x="52" y="623">Internal Rate of Return [IRR]</text>
<text class="b" x="52" y="659">Estimated Business Valuation</text>
<g class="k"><text x="336" y="659">$</text><text x="450" y="659">$</text><text x="564" y="659">$</text><text x="678" y="659">$</text><text x="792" y="659">$</text></g>
<g class="c m"><text x="421" y="660">-</text><text x="535" y="660">-</text><text x="649" y="660">-</text><text x="763" y="660">-</text><text x="877" y="660">-</text></g>

<g class="c m"><text x="387" y="712">Year 1</text><text x="501" y="712">Year 2</text><text x="615" y="712">Year 3</text><text x="729" y="712">Year 4</text><text x="843" y="712">Year 5</text></g>
<text class="b e" x="1063.500" y="712">Total Dept Payed</text>
<text class="b" x="52" y="730">Annual Dept Repayment</text>
<g class="k"><text x="336" y="730">$</text><text x="450" y="730">$</text><text x="564" y="730">$</text><text x="678" y="730">$</text><text x="792" y="730">$</text><text x="906" y="730">$</text></g>
<g class="c m"><text x="421" y="731">-</text><text x="535" y="731">-</text><text x="649" y="731">-</text><text x="763" y="731">-</text><text x="877" y="731">-</text><text x="1043.500" y="731">-</text></g>

<g class="c m"><text x="387" y="783">Year 1</text><text x="501" y="783">Year 2</text><text x="615" y="783">Year 3</text><text x="729" y="783">Year 4</text><text x="843" y="783">Year 5</text></g>
<text class="b e" x="1063.500" y="783">Total</text>
<text class="b" x="52" y="801">Net Cash Flow After Depth Repayment</text>
<g class="k"><text x="336" y="801">$</text><text x="450" y="801">$</text><text x="564" y="801">$</text><text x="678" y="801">$</text><text x="792" y="801">$</text><text x="906" y="801">$</text></g>
<g class="c m"><text x="421" y="802">-</text><text x="535" y="802">-</text><text x="649" y="802">-</text><text x="763" y="802">-</text><text x="877" y="802">-</text><text x="1043.500" y="802">-</text></g>

<!-- chart -->
<rect x="1085.500" y="256.500" width="694" height="548" fill="#fff" stroke="#d9d9d9"/>
<text x="1261" y="289.500" style="font-size:17px;font-weight:bold;fill:#595959" textLength="370" lengthAdjust="spacingAndGlyphs">Business Valuation vs Business Acquisition Price</text>
<path stroke="#d9d9d9" d="M1125.500 305.500H1764.500M1125.500 348.500H1764.500M1125.500 392.500H1764.500M1125.500 436.500H1764.500M1125.500 479.500H1764.500M1125.500 523.500H1764.500M1125.500 567.500H1764.500M1125.500 611.500H1764.500M1125.500 654.500H1764.500M1125.500 698.500H1764.500M1125.500 742.500H1764.500"/>
<g class="ax">
<text x="1099" y="308" textLength="12" lengthAdjust="spacingAndGlyphs">$1</text><text x="1099" y="352" textLength="12" lengthAdjust="spacingAndGlyphs">$1</text><text x="1099" y="396" textLength="12" lengthAdjust="spacingAndGlyphs">$1</text><text x="1099" y="439" textLength="12" lengthAdjust="spacingAndGlyphs">$1</text><text x="1099" y="483" textLength="12" lengthAdjust="spacingAndGlyphs">$1</text><text x="1099" y="527" textLength="12" lengthAdjust="spacingAndGlyphs">$1</text><text x="1099" y="570" textLength="12" lengthAdjust="spacingAndGlyphs">$0</text><text x="1099" y="614" textLength="12" lengthAdjust="spacingAndGlyphs">$0</text><text x="1099" y="658" textLength="12" lengthAdjust="spacingAndGlyphs">$0</text><text x="1099" y="702" textLength="12" lengthAdjust="spacingAndGlyphs">$0</text><text x="1097" y="745.500" textLength="10" lengthAdjust="spacingAndGlyphs">$-</text>
<text x="1173.500" y="761" textLength="30" lengthAdjust="spacingAndGlyphs">Year 1</text><text x="1301.500" y="761" textLength="30" lengthAdjust="spacingAndGlyphs">Year 2</text><text x="1429.500" y="761" textLength="30" lengthAdjust="spacingAndGlyphs">Year 3</text><text x="1557" y="761" textLength="30" lengthAdjust="spacingAndGlyphs">Year 4</text><text x="1685" y="761" textLength="30" lengthAdjust="spacingAndGlyphs">Year 5</text>
<text x="1314.500" y="787.500" textLength="91" lengthAdjust="spacingAndGlyphs">Business Valuation</text><text x="1456.500" y="787.500" textLength="126" lengthAdjust="spacingAndGlyphs">Business Acquisition Price</text>
</g>
<path d="M1189.500 742H1700" stroke="#ed7d31" stroke-width="3"/>
<g fill="#c55a11"><circle cx="1189.500" cy="742" r="3.500"/><circle cx="1317.500" cy="742" r="3.500"/><circle cx="1444.500" cy="742" r="3.500"/><circle cx="1572.500" cy="742" r="3.500"/><circle cx="1700" cy="742" r="3.500"/></g>
<path d="M1285 784H1312.500" stroke="#7ecb4d" stroke-width="3"/><circle cx="1299" cy="784" r="3.500" fill="#00b050"/>
<path d="M1427 784H1454" stroke="#ed7d31" stroke-width="3"/><circle cx="1441" cy="784" r="3.500" fill="#c55a11"/>

<!-- v scrollbar -->
<rect x="1899" y="207" width="21" height="783" fill="#e6e6e6"/>
<path d="M1899 227V990" stroke="#ababab"/>
<rect x="1902.500" y="209.500" width="14" height="14" fill="#fff" stroke="#ababab"/><path d="M1906 218.500H1913L1909.500 214.500Z" fill="#666"/>
<rect x="1902.500" y="238.500" width="14" height="736.500" fill="#fff" stroke="#ababab"/>
<rect x="1902.500" y="976.500" width="14" height="13.500" fill="#fff" stroke="#ababab"/><path d="M1906 982H1913L1909.500 986Z" fill="#666"/>

<!-- sheet tabs -->
<rect x="0" y="990" width="1920" height="28" fill="#e6e6e6"/>
<path d="M0 990.500H1920" stroke="#ababab"/><path d="M0 1018.500H1920" stroke="#c8c6c4"/>
<path d="M31 1000L27.500 1003.500L31 1007Z" fill="#bbb"/><path d="M56.500 1000L60 1003.500L56.500 1007Z" fill="#bbb"/>
<path d="M100.500 993V1013M201.500 993V1013M291.500 993V1013" stroke="#aaa"/>
<rect x="103" y="993" width="96" height="22" fill="#c00000"/>
<text x="115" y="1008.500" style="font-size:13px;fill:#fff" textLength="70" lengthAdjust="spacingAndGlyphs">Introduction</text>
<text x="216" y="1008.500" style="font-size:13px;fill:#444" textLength="60" lengthAdjust="spacingAndGlyphs">Data Input</text>
<text x="305.500" y="1008.500" style="font-size:13px;fill:#444" textLength="57.500" lengthAdjust="spacingAndGlyphs">Cash Flow</text>
<rect x="377.500" y="990" width="81" height="24" fill="#fff"/>
<path d="M377.500 990V1014M458.500 990V1014" stroke="#ababab"/><rect x="377.500" y="1013" width="81" height="2" fill="#217346"/>
<text x="389" y="1008.500" style="font-size:13px;font-weight:bold;fill:#217346" textLength="58" lengthAdjust="spacingAndGlyphs">Summary</text>
<circle cx="500" cy="1004" r="7.500" fill="none" stroke="#808080" stroke-width="1.300"/><path d="M496 1004H504M500 1000V1008" stroke="#666"/>
<path d="M1153.500 999V1001M1153.500 1003V1005M1153.500 1007V1009" stroke="#999" stroke-width="1.500"/>
<rect x="1169.500" y="997.500" width="14" height="14" fill="#fff" stroke="#ababab"/><path d="M1178.500 1001V1008L1174.500 1004.500Z" fill="#666"/>
<rect x="1184" y="997.500" width="700" height="14" fill="#d9d9d9"/>
<rect x="1184.500" y="997.500" width="667" height="14" fill="#fff" stroke="#ababab"/>
<rect x="1884.500" y="997.500" width="14" height="14" fill="#fff" stroke="#ababab"/><path d="M1890 1001V1008L1894 1004.500Z" fill="#666"/>

<!-- status bar -->
<rect x="0" y="1019" width="1920" height="20" fill="#f3f2f1"/>
<rect x="1620" y="1019" width="40" height="20" fill="#c6c6c6"/>
<path d="M1633.500 1022.500H1646.500V1035.500H1633.500ZM1637.500 1022.500V1035.500M1642.500 1022.500V1035.500M1633.500 1026.500H1646.500M1633.500 1031.500H1646.500" fill="none" stroke="#333"/>
<path d="M1674.500 1022.500H1686.500V1035.500H1674.500ZM1677.500 1025.500H1683.500M1677.500 1028.500H1683.500M1677.500 1031.500H1683.500" fill="none" stroke="#444"/>
<path d="M1714 1022.500H1727V1035.500H1714ZM1714 1030.500H1722.500V1022.500M1718.500 1022.500V1030.500" fill="none" stroke="#444"/>
<path d="M1746 1029.500H1753" stroke="#444" stroke-width="1.300"/>
<path d="M1759 1029.500H1859" stroke="#aaa"/>
<rect x="1807" y="1024" width="5" height="11" fill="#6e6e6e"/>
<path d="M1863 1029.500H1871M1867 1025.500V1033.500" stroke="#444" stroke-width="1.200"/>
<text x="1885.500" y="1034" style="font-size:12px;fill:#666" textLength="26.500" lengthAdjust="spacingAndGlyphs">100%</text>
</svg>
</body></html>
